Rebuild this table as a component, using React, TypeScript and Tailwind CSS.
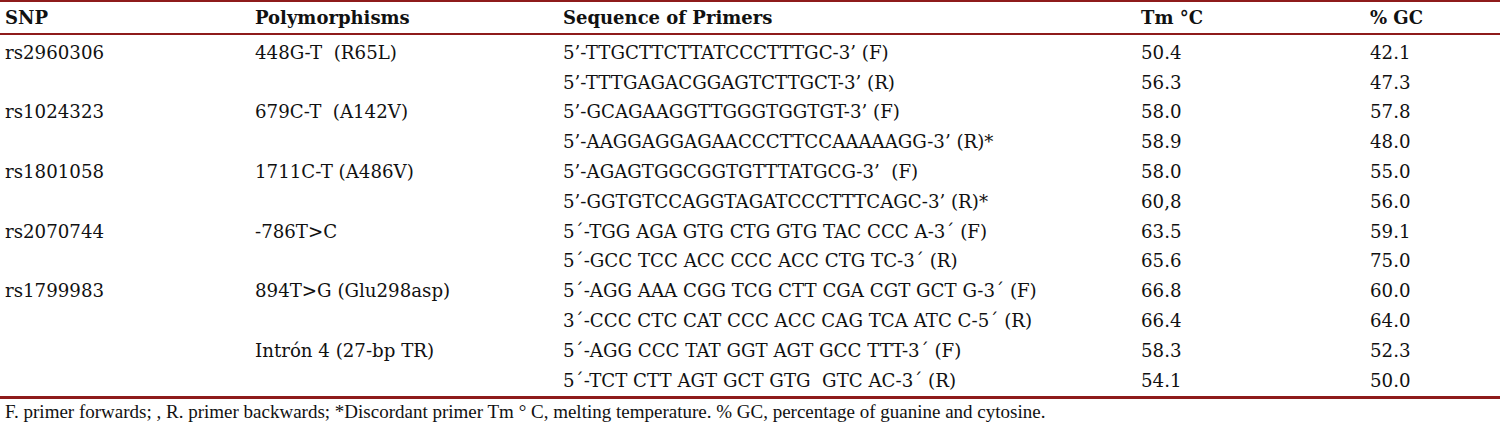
import React from "react";

type Row = [string, string, string, string, string];

const rows: Row[] = [
  ["rs2960306", "448G-T  (R65L)", "5’-TTGCTTCTTATCCCTTTGC-3’ (F)", "50.4", "42.1"],
  ["", "", "5’-TTTGAGACGGAGTCTTGCT-3’ (R)", "56.3", "47.3"],
  ["rs1024323", "679C-T  (A142V)", "5’-GCAGAAGGTTGGGTGGTGT-3’ (F)", "58.0", "57.8"],
  ["", "", "5’-AAGGAGGAGAACCCTTCCAAAAAGG-3’ (R)*", "58.9", "48.0"],
  ["rs1801058", "1711C-T (A486V)", "5’-AGAGTGGCGGTGTTTATGCG-3’  (F)", "58.0", "55.0"],
  ["", "", "5’-GGTGTCCAGGTAGATCCCTTTCAGC-3’ (R)*", "60,8", "56.0"],
  ["rs2070744", "-786T>C", "5´-TGG AGA GTG CTG GTG TAC CCC A-3´ (F)", "63.5", "59.1"],
  ["", "", "5´-GCC TCC ACC CCC ACC CTG TC-3´ (R)", "65.6", "75.0"],
  ["rs1799983", "894T>G (Glu298asp)", "5´-AGG AAA CGG TCG CTT CGA CGT GCT G-3´ (F)", "66.8", "60.0"],
  ["", "", "3´-CCC CTC CAT CCC ACC CAG TCA ATC C-5´ (R)", "66.4", "64.0"],
  ["", "Intrón 4 (27-bp TR)", "5´-AGG CCC TAT GGT AGT GCC TTT-3´ (F)", "58.3", "52.3"],
  ["", "", "5´-TCT CTT AGT GCT GTG  GTC AC-3´ (R)", "54.1", "50.0"],
];

const grid = "grid grid-cols-[250px_308px_578px_229px_1fr] pl-[5px]";

export default function App() {
  return (
    <div
      className="w-[1500px] h-[429px] bg-white text-[#111111] overflow-hidden"
      style={{ fontFamily: '"DejaVu Serif", "Liberation Serif", serif' }}
    >
      <div className="h-[2px] bg-[#8e1b1b]" />
      <div className={`${grid} h-[31px] items-center font-bold text-[18px] leading-none`}>
        <div>SNP</div>
        <div>Polymorphisms</div>
        <div>Sequence of Primers</div>
        <div>Tm °C</div>
        <div>% GC</div>
      </div>
      <div className="h-[2px] bg-[#8e1b1b]" />
      <div className="pt-[3px] text-[18.2px] leading-none">
        {rows.map((r, i) => (
          <div key={i} className={`${grid} h-[29.8px] items-center whitespace-pre`}>
            <div>{r[0]}</div>
            <div>{r[1]}</div>
            <div>{r[2]}</div>
            <div>{r[3]}</div>
            <div>{r[4]}</div>
          </div>
        ))}
      </div>
      <div className="h-[3px] bg-[#8e1b1b]" />
      <div
        className="pl-[5px] pt-[2px] text-[19px] leading-[22px]"
        style={{ fontFamily: '"Liberation Serif", serif' }}
      >
        F. primer forwards; , R. primer backwards; *Discordant primer Tm ° C, melting temperature. % GC, percentage of guanine and cytosine.
      </div>
    </div>
  );
}
